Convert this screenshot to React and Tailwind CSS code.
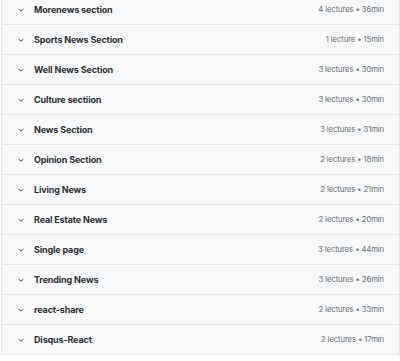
import React from "react";

const secoes = [
  { nome: "Morenews section", info: "4 lectures • 36min" },
  { nome: "Sports News Section", info: "1 lecture • 15min" },
  { nome: "Well News Section", info: "3 lectures • 30min" },
  { nome: "Culture sectiion", info: "3 lectures • 30min" },
  { nome: "News Section", info: "3 lectures • 31min" },
  { nome: "Opinion Section", info: "2 lectures • 18min" },
  { nome: "Living News", info: "2 lectures • 21min" },
  { nome: "Real Estate News", info: "2 lectures • 20min" },
  { nome: "Single page", info: "3 lectures • 44min" },
  { nome: "Trending News", info: "3 lectures • 26min" },
  { nome: "react-share", info: "2 lectures • 33min" },
  { nome: "Disqus-React", info: "2 lectures • 17min" },
];

function Chevron() {
  return (
    <svg width="8" height="8" viewBox="0 0 8 8" className="text-[#4a4d50]">
      <path d="M1.6 3 L4 5.2 L6.4 3" fill="none" stroke="currentColor" strokeWidth="1" />
    </svg>
  );
}

export default function App() {
  return (
    <div
      className="min-h-screen bg-white"
      style={{ fontFamily: "Inter, 'Liberation Sans', sans-serif" }}
    >
      <div className="w-[399px] ml-px mt-[-5px] border-x border-[#e4e7ea]">
        {secoes.map((s) => (
          <div
            key={s.nome}
            className="h-[30px] bg-[#f7f9fa] border-b border-[#e4e7ea] flex items-center pl-[15px] pr-[15px]"
          >
            <Chevron />
            <span className="ml-[9px] flex-1 text-[9px] font-bold tracking-[-0.15px] text-[#2d2f31]">
              {s.nome}
            </span>
            <span className="text-[7.7px] tracking-[-0.1px] text-[#6a6f73]">{s.info}</span>
          </div>
        ))}
      </div>
    </div>
  );
}
